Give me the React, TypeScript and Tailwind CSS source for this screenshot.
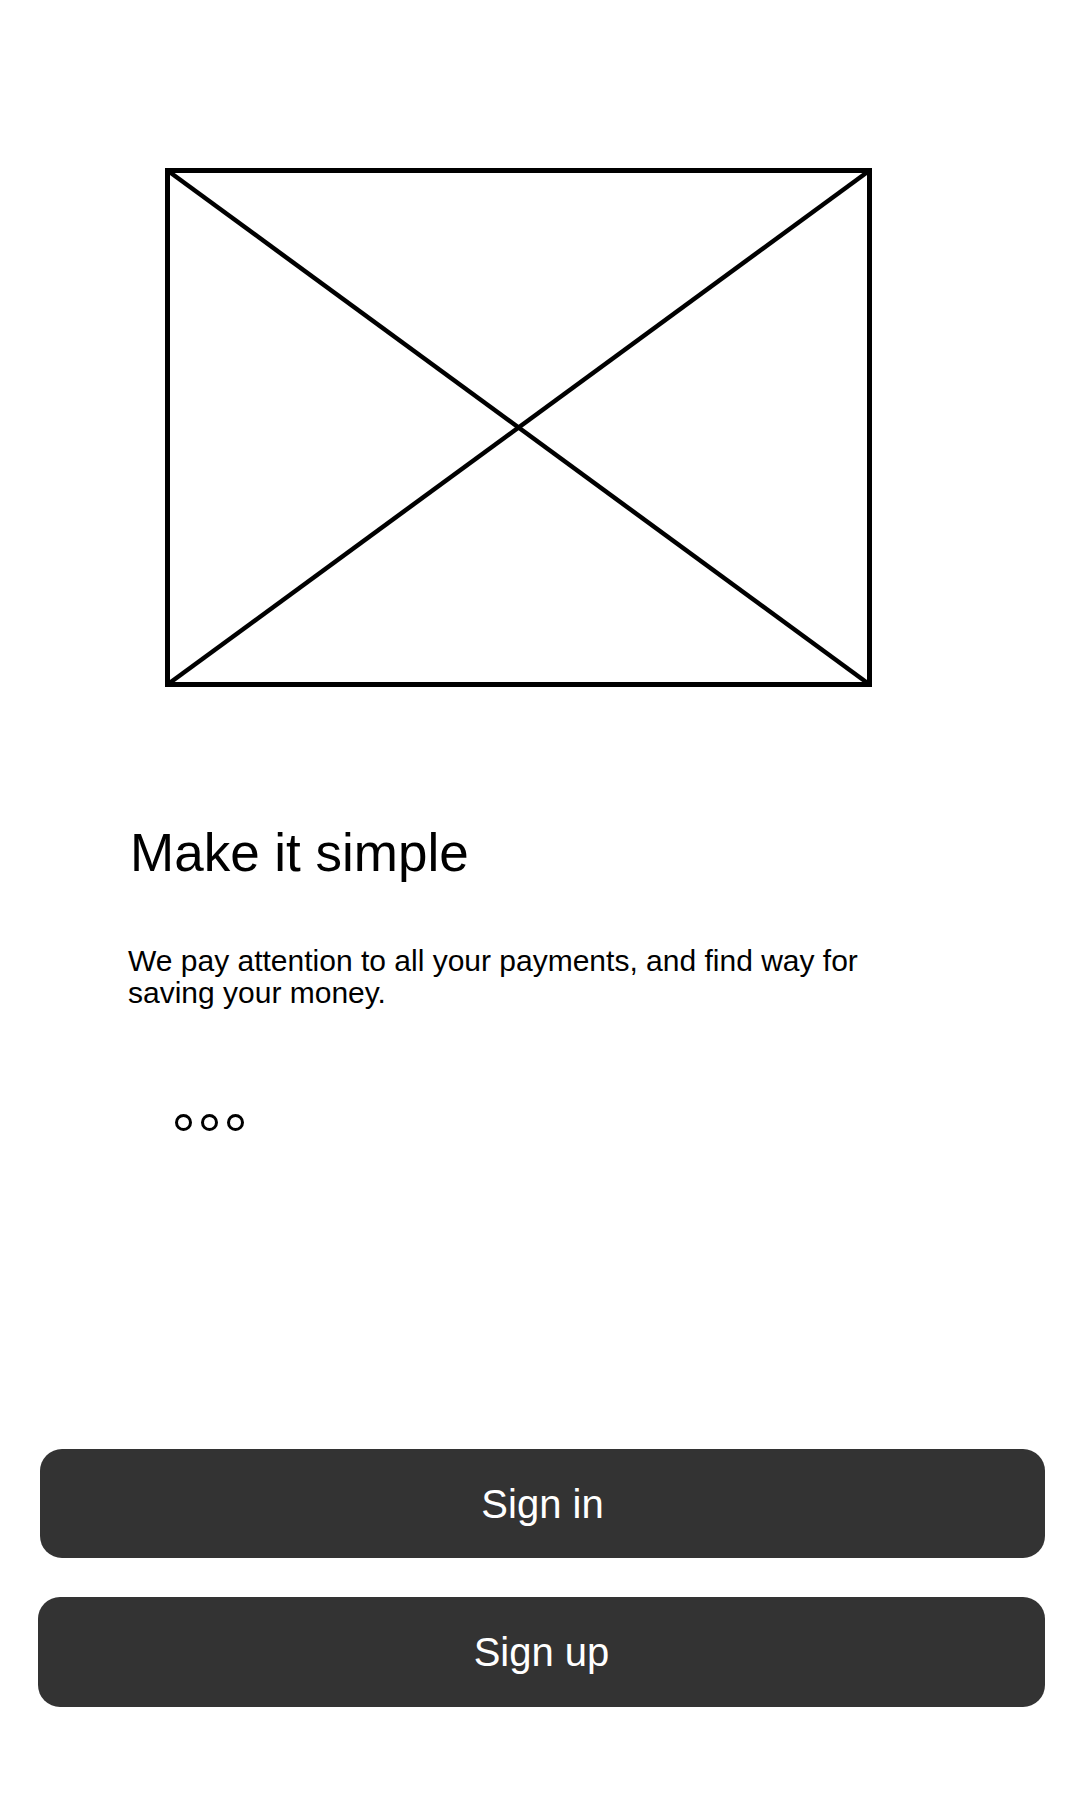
import React from "react";

const Placeholder: React.FC = () => (
  <svg width="707" height="519" viewBox="0 0 707 519" className="block">
    <rect x="2.5" y="2.5" width="702" height="514" fill="none" stroke="#000" strokeWidth="5" />
    <line x1="2.5" y1="2.5" x2="704.5" y2="516.5" stroke="#000" strokeWidth="4.5" />
    <line x1="704.5" y1="2.5" x2="2.5" y2="516.5" stroke="#000" strokeWidth="4.5" />
  </svg>
);

const App: React.FC = () => {
  return (
    <div className="flex h-[1800px] w-[1080px] flex-col bg-white font-['Liberation_Sans',Arial,sans-serif] text-black">
      {/* image */}
      <div className="ml-[165px] mt-[168px]">
        <Placeholder />
      </div>

      {/* copy */}
      <h1 className="ml-[130px] mt-[139px] text-[53px] leading-[53px] font-normal">Make it simple</h1>
      <p className="ml-[128px] mt-[66px] w-[780px] text-[30px] leading-[32px]">
        We pay attention to all your payments, and find way for saving your money.
      </p>

      {/* pager */}
      <div className="ml-[175px] mt-[105px] flex gap-[9px]">
        <span className="h-[17px] w-[17px] rounded-full border-[3px] border-black" />
        <span className="h-[17px] w-[17px] rounded-full border-[3px] border-black" />
        <span className="h-[17px] w-[17px] rounded-full border-[3px] border-black" />
      </div>

      {/* actions */}
      <button className="ml-[40px] mt-[318px] flex h-[109px] w-[1005px] items-center justify-center rounded-[22px] bg-[#333333] text-[40px] text-white">
        Sign in
      </button>
      <button className="ml-[38px] mt-[39px] flex h-[110px] w-[1007px] items-center justify-center rounded-[22px] bg-[#333333] text-[40px] text-white">
        Sign up
      </button>
    </div>
  );
};

export default App;
